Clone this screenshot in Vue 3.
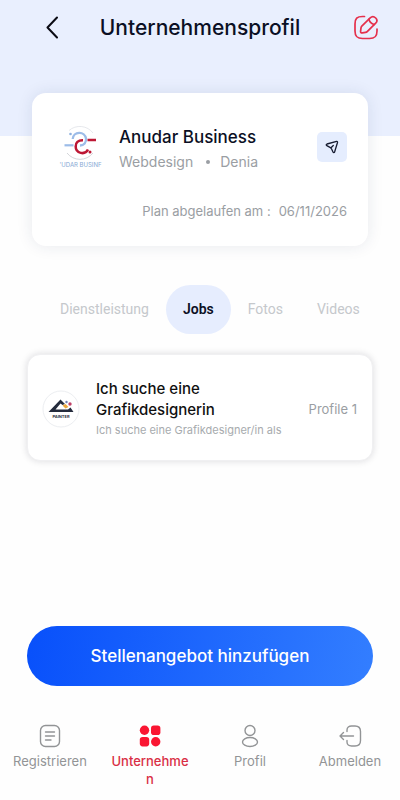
<script setup>
import { ref } from 'vue'

const tabs = ['Dienstleistung', 'Jobs', 'Fotos', 'Videos']
const activeTab = ref('Jobs')
</script>

<template>
  <div class="page">
    <header class="hero">
      <button class="icon-button" type="button" aria-label="Zurück">
        <svg width="12" height="24" viewBox="0 0 12 24" fill="none" stroke="#0b0b14" stroke-width="2" stroke-linecap="round" stroke-linejoin="round">
          <path d="M11 1.500 L1.500 11.500 L11 21.500" />
        </svg>
      </button>
      <h1>Unternehmensprofil</h1>
      <button class="icon-button" type="button" aria-label="Bearbeiten">
        <svg width="26" height="26" viewBox="0 0 26 26" fill="none" stroke="#e5304c" stroke-width="1.700" stroke-linecap="round" stroke-linejoin="round">
          <path d="M11.500 1.500 H9.500 C4 1.500 2 3.500 2 9 V16 C2 21.500 4 23.500 9.500 23.500 H16.500 C22 23.500 24 21.500 24 16 V14" />
          <path d="M17.200 2.800 L8.800 11.200 C8.400 11.600 8.100 12.300 8 12.900 L7.600 16.100 C7.400 17.400 8.200 18.100 9.400 17.900 L12.500 17.400 C13.100 17.300 13.800 17 14.200 16.600 L22.700 8.200 C24.200 6.700 24.700 5.100 22.700 3 C20.600 0.900 18.800 1.300 17.200 2.800 Z" />
          <path d="M15.900 4.200 C16.600 6.800 18.500 8.800 21.200 9.500" />
        </svg>
      </button>
    </header>

    <main>
      <section class="company">
        <div class="company-top">
          <svg class="company-logo" width="44" height="44" viewBox="0 0 44 44" fill="none" role="img" aria-label="Anudar Business">
            <path d="M11 5.500 A16.500 16.500 0 0 1 35 8" stroke="#dfe2e7" stroke-width="0.800" />
            <path d="M35 28 A16.500 16.500 0 0 1 9 28" stroke="#c9ccd1" stroke-width="0.800" />
            <path d="M14.700 14 A6.700 6.700 0 0 1 28 13.500 C28.500 17.500 26 20.500 22 20.500" stroke="#9cbce8" stroke-width="2.300" />
            <path d="M6.500 20.300 H15.500" stroke="#9cbce8" stroke-width="2.200" />
            <path d="M38 15 H29.500 M25 15.200 C20 15 17.500 18 17.700 21.500 A6.500 6.500 0 0 0 30 24.500" stroke="#bd1734" stroke-width="2.500" />
            <circle cx="12.500" cy="9" r="1.300" fill="#8eb1df" />
            <circle cx="32" cy="27" r="1.500" fill="#bd1734" />
            <text x="22.500" y="41.500" text-anchor="middle" font-size="6" fill="#86a9d4">'UDAR BUSINF</text>
          </svg>
          <div class="company-info">
            <h2>Anudar Business</h2>
            <p class="meta"><span>Webdesign</span><span class="dot"></span><span>Denia</span></p>
          </div>
          <button class="send" type="button" aria-label="Senden">
            <svg width="14" height="14" viewBox="0 0 14 14" fill="none" stroke="#161b30" stroke-width="1.300" stroke-linecap="round" stroke-linejoin="round">
              <path d="M11.600 1.400 L2 4 C1 4.300 1 5.200 1.800 5.700 L5 7.300 C5.800 7.700 6.200 8.200 6.600 9 L8 12 C8.400 12.900 9.300 12.900 9.600 12 L12.500 2.500 C12.700 1.700 12.300 1.200 11.600 1.400 Z M6 7.700 L8.300 5.500" />
            </svg>
          </button>
        </div>
        <p class="plan"><span>Plan abgelaufen am :</span><time datetime="2026-11-06">06/11/2026</time></p>
      </section>

      <nav class="tabs" aria-label="Bereiche">
        <button
          v-for="tab in tabs"
          :key="tab"
          type="button"
          :class="{ active: tab === activeTab }"
          @click="activeTab = tab"
        >{{ tab }}</button>
      </nav>

      <article class="job">
        <svg class="job-logo" width="38" height="38" viewBox="0 0 38 38" role="img" aria-label="Painter">
          <circle cx="19" cy="19" r="18" fill="#fff" stroke="#eceef1" />
          <path d="M6.500 22 L18.500 9.500 L23 14 L20.500 15 L18.500 13.500 L13.500 19.500 H26 L28.500 17.500 L31.500 22 Z" fill="#242b3c" />
          <path d="M20.500 15.500 L23.500 14 L26.500 17 L23.500 18.500 Z" fill="#eda83c" />
          <circle cx="24.500" cy="12" r="1.200" fill="#6d80b5" />
          <circle cx="28" cy="14" r="1.700" fill="#bf4168" />
          <text x="19" y="27.500" text-anchor="middle" font-size="4" font-weight="700" fill="#303441">PAINTER</text>
        </svg>
        <div class="job-info">
          <h3>Ich suche eine Grafikdesignerin</h3>
          <p>Ich suche eine Grafikdesigner/in als</p>
        </div>
        <span class="profiles">Profile 1</span>
      </article>

      <button class="primary" type="button">Stellenangebot hinzufügen</button>
    </main>

    <nav class="bottom" aria-label="Hauptnavigation">
      <a href="#registrieren">
        <svg width="24" height="24" viewBox="0 0 24 24" fill="none" stroke="#929496" stroke-width="1.400" stroke-linecap="round">
          <rect x="2.500" y="1.500" width="19" height="21" rx="5" />
          <path d="M7.500 8 H16.500 M7.500 12 H16.500 M7.500 16 H13" />
        </svg>
        <span>Registrieren</span>
      </a>
      <a href="#unternehmen" class="current" aria-current="page">
        <svg width="24" height="24" viewBox="0 0 24 24" fill="#fa1632">
          <circle cx="6.500" cy="6.300" r="4.700" />
          <rect x="13" y="1.600" width="9.400" height="9.400" rx="2.800" />
          <rect x="1.800" y="13" width="9.400" height="9.400" rx="2.800" />
          <circle cx="17.700" cy="17.700" r="4.700" />
        </svg>
        <span>Unternehmen</span>
      </a>
      <a href="#profil">
        <svg width="24" height="24" viewBox="0 0 24 24" fill="none" stroke="#929496" stroke-width="1.400">
          <circle cx="12" cy="6.500" r="5" />
          <ellipse cx="12" cy="18" rx="7.500" ry="4.500" />
        </svg>
        <span>Profil</span>
      </a>
      <a href="#abmelden">
        <svg width="24" height="24" viewBox="0 0 24 24" fill="none" stroke="#929496" stroke-width="1.400" stroke-linecap="round" stroke-linejoin="round">
          <path d="M9 7.500 V6 C9 3.200 11 2 13.500 2 H17 C20.500 2 22.500 4 22.500 7.500 V16.500 C22.500 20 20.500 22 17 22 H13.500 C11 22 9 20.800 9 18 V16.500" />
          <path d="M15.500 12 H2 M5.500 8.500 L2 12 L5.500 15.500" />
        </svg>
        <span>Abmelden</span>
      </a>
    </nav>
  </div>
</template>

<style>
body {
  margin: 0;
  background: #fefefe;
}
</style>

<style scoped>
.page {
  display: flex;
  flex-direction: column;
  min-height: 100vh;
  font-family: Inter, "Noto Sans", sans-serif;
  color: #0b0f24;
}
* {
  box-sizing: border-box;
}
h1,
h2,
h3,
p {
  margin: 0;
  font-weight: 500;
}
button {
  border: 0;
  padding: 0;
  background: none;
  font: inherit;
  cursor: pointer;
}
svg {
  display: block;
  flex: none;
}
.hero {
  display: flex;
  align-items: center;
  background: #e9effe;
  padding: 8px 21px 88px 46px;
}
.hero h1 {
  flex: 1;
  padding-right: 11px;
  font-size: 21px;
  line-height: 40px;
  text-align: center;
}
.icon-button {
  display: flex;
}
main {
  display: flex;
  flex-direction: column;
  flex: 1;
  padding: 0 27px;
}
.company {
  margin: -43px 5px 0;
  padding: 32px 21px 24px 26px;
  border-radius: 14px;
  background: #fff;
  box-shadow: 0 0 16px rgba(30, 45, 90, 0.1);
}
.company-top {
  display: flex;
  align-items: center;
}
.company-logo {
  align-self: flex-start;
}
.company-info {
  flex: 1;
  padding-left: 17px;
}
.company-info h2 {
  font-size: 17px;
  line-height: 24px;
}
.meta {
  display: flex;
  align-items: center;
  font-size: 14px;
  line-height: 26px;
  font-weight: 400;
  color: #9a9ea3;
}
.dot {
  width: 4px;
  height: 4px;
  margin: 0 10px 0 13px;
  border-radius: 50%;
  background: #9a9ea3;
}
.send {
  display: flex;
  align-items: center;
  justify-content: center;
  width: 30px;
  height: 30px;
  margin-bottom: 6px;
  border-radius: 5px;
  background: #e5edfe;
}
.plan {
  display: flex;
  justify-content: flex-end;
  gap: 8px;
  margin-top: 25px;
  font-size: 13px;
  line-height: 22px;
  font-weight: 400;
  color: #9a9ea3;
}
.tabs {
  display: flex;
  margin: 39px -20px 0 16px;
}
.tabs button {
  height: 49px;
  padding: 0 17px 2px;
  border-radius: 25px;
  font-family: Roboto, sans-serif;
  font-size: 14px;
  color: #c5c8cc;
}
.tabs .active {
  background: #e6edfe;
  color: #0b0f24;
  font-weight: 600;
}
.job {
  display: flex;
  align-items: center;
  margin-top: 20px;
  padding: 23px 15px 20px;
  border-radius: 13px;
  background: #fff;
  border: 1px solid #f0f0f2;
  box-shadow: 0 0 7px rgba(20, 20, 40, 0.15);
}
.job-logo {
  margin-left: -1px;
}
.job-info {
  flex: 1;
  padding-left: 16px;
}
.job h3 {
  max-width: 150px;
  font-size: 15px;
  line-height: 21px;
  color: #101010;
}
.job p {
  font-size: 11px;
  line-height: 20px;
  font-weight: 400;
  color: #a7abae;
}
.profiles {
  font-size: 13px;
  color: #9a9ea3;
}
.primary {
  width: 100%;
  height: 60px;
  margin-top: auto;
  border-radius: 30px;
  background: linear-gradient(100deg, #0850fb, #337eff);
  color: #fff;
  font-size: 17px;
  font-weight: 500;
}
.bottom {
  display: grid;
  grid-template-columns: repeat(4, 1fr);
  padding: 38px 0 12px;
}
.bottom a {
  display: flex;
  flex-direction: column;
  align-items: center;
  gap: 4px;
  font-size: 13px;
  line-height: 18px;
  color: #929496;
  text-align: center;
  text-decoration: none;
}
.bottom span {
  max-width: 80px;
  overflow-wrap: anywhere;
}
.bottom .current {
  color: #d92e45;
  font-weight: 500;
}
</style>
